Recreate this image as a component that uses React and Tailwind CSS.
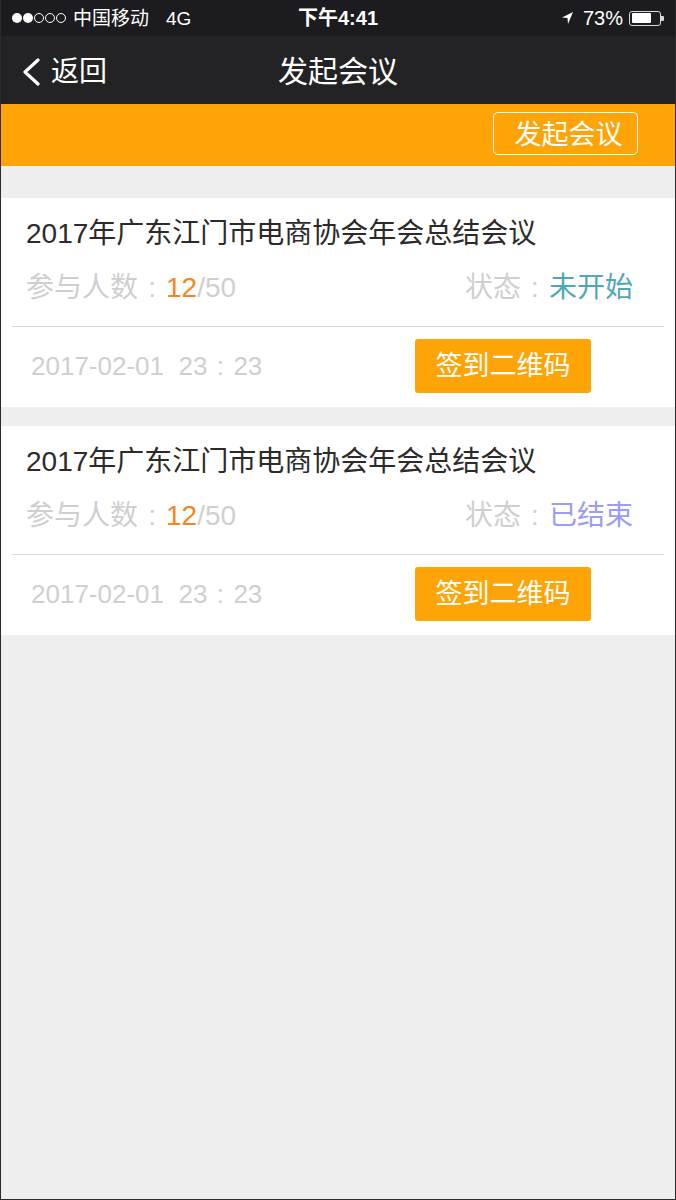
import React from 'react';

const font = { fontFamily: '"Liberation Sans", "Noto Sans CJK SC", sans-serif' };

const meetings = [
  { title: '2017年广东江门市电商协会年会总结会议', joined: 12, total: 50, status: '未开始', statusColor: 'text-[#4fa8b6]', date: '2017-02-01', time: ['23', '23'] },
  { title: '2017年广东江门市电商协会年会总结会议', joined: 12, total: 50, status: '已结束', statusColor: 'text-[#9d9cf6]', date: '2017-02-01', time: ['23', '23'] },
];

// full-width colon, drawn centred in its em box
const Colon = () => <span className="inline-block w-[1em] text-center">:</span>;

const StatusBar = () => (
  <div className="relative h-[36px] bg-[#1c1b1f] flex items-center justify-between px-[11px] text-white text-[19px]">
    <div className="flex items-center">
      <div className="flex items-center gap-[1px]">
        <span className="w-[10px] h-[10px] rounded-full bg-white" />
        <span className="w-[10px] h-[10px] rounded-full bg-white" />
        <span className="w-[10px] h-[10px] rounded-full border border-white" />
        <span className="w-[10px] h-[10px] rounded-full border border-white" />
        <span className="w-[10px] h-[10px] rounded-full border border-white" />
      </div>
      <span className="ml-[7px] leading-none">中国移动</span>
      <span className="ml-[17px] leading-none">4G</span>
    </div>
    <div className="absolute left-0 right-0 text-center font-semibold text-[20px] leading-none pointer-events-none">下午4:41</div>
    <div className="flex items-center">
      <svg width="13" height="14" viewBox="0 0 13 14" className="mr-[9px]">
        <path d="M12 1 L1 6.5 L6.5 7 L7 13 Z" fill="white" />
      </svg>
      <span className="leading-none text-[20px]">73%</span>
      <div className="ml-[6px] flex items-center">
        <div className="w-[32px] h-[15px] rounded-[3px] border border-[#d8d8d8] p-[1.5px] flex">
          <div className="w-[73%] h-full bg-white rounded-[1px]" />
        </div>
        <div className="w-[3px] h-[5px] bg-[#d8d8d8] rounded-r-[1px]" />
      </div>
    </div>
  </div>
);

const MeetingCard = ({ m }) => (
  <div className="bg-white">
    <div className="px-[25px] pt-[19px] pb-[21px]">
      <div className="text-[28px] leading-[34px] text-[#2c2a2a]">{m.title}</div>
      <div className="mt-[20px] flex justify-between items-center text-[28px] leading-[34px] pr-[17px]">
        <div className="text-[#cfcfcf]">
          参与人数<Colon /><span className="text-[#f5861f]">{m.joined}</span>/{m.total}
        </div>
        <div className="text-[#cfcfcf]">
          状态<Colon /><span className={m.statusColor}>{m.status}</span>
        </div>
      </div>
    </div>
    <div className="mx-[11px] h-px bg-[#d9d9d9]" />
    <div className="flex items-center justify-between pl-[30px] pr-[84px] pt-[12px] pb-[14px]">
      <span className="text-[26px] text-[#cfcfcf] whitespace-pre">
        {m.date}  {m.time[0]}<Colon />{m.time[1]}
      </span>
      <button className="w-[176px] h-[54px] rounded-[3px] bg-[#ffa406] text-white text-[27px] leading-none">
        签到二维码
      </button>
    </div>
  </div>
);

export default function App() {
  return (
    <div className="relative w-[676px] min-h-[1200px] bg-[#eeeeee] border-x border-b border-[#2b2b2b] box-border" style={font}>
      <StatusBar />
      <div className="h-[68px] bg-[#232325] flex items-center relative px-[19px] pt-[3px]">
        <div className="flex items-center text-white">
          <svg width="22" height="28" viewBox="0 0 22 28" fill="none">
            <path d="M18 2 L5 14 L18 26" stroke="white" strokeWidth="3.2" strokeLinecap="round" strokeLinejoin="round" />
          </svg>
          <span className="ml-[9px] text-[28px] leading-none">返回</span>
        </div>
        <div className="absolute left-0 right-0 text-center text-white text-[30px] leading-none pointer-events-none">发起会议</div>
      </div>
      <div className="h-[62px] bg-[#ffa406] flex justify-end items-start pt-[8px] pr-[37px]">
        <button className="w-[145px] h-[43px] rounded-[5px] border border-white text-white text-[27px] leading-none pl-[6px] pt-[3px]">
          发起会议
        </button>
      </div>
      <div className="pt-[32px] flex flex-col gap-[19px]">
        {meetings.map((m, i) => (
          <MeetingCard key={i} m={m} />
        ))}
      </div>
    </div>
  );
}
